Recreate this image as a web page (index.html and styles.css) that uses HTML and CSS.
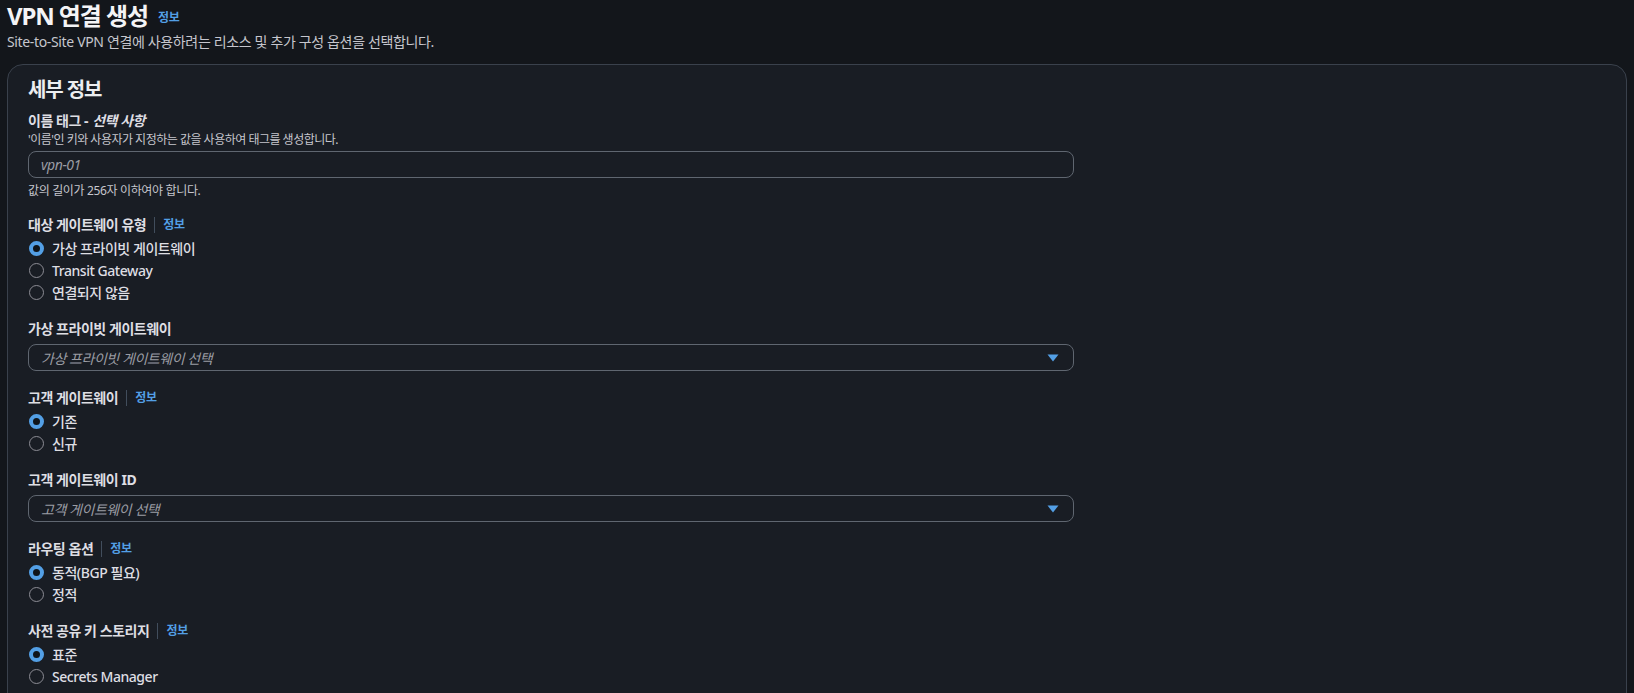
FILE: index.html
```html
<!DOCTYPE html>
<html lang="ko">
<head>
<meta charset="utf-8">
<title>VPN 연결 생성</title>
<link rel="stylesheet" href="styles.css">
</head>
<body>
<div class="page">
  <header class="page-header">
    <h1 class="title">VPN 연결 생성 <a class="info" href="#">정보</a></h1>
    <p class="subtitle">Site-to-Site VPN 연결에 사용하려는 리소스 및 추가 구성 옵션을 선택합니다.</p>
  </header>

  <section class="container">
    <h2 class="container-title">세부 정보</h2>

    <div class="field">
      <div class="label">이름 태그 - <em>선택 사항</em></div>
      <div class="desc">'이름'인 키와 사용자가 지정하는 값을 사용하여 태그를 생성합니다.</div>
      <div class="input"><span class="placeholder">vpn-01</span></div>
      <div class="constraint">값의 길이가 256자 이하여야 합니다.</div>
    </div>

    <div class="field">
      <div class="label">대상 게이트웨이 유형<span class="sep"></span><a class="info" href="#">정보</a></div>
      <div class="radios">
        <div class="radio checked"><span class="dot"></span>가상 프라이빗 게이트웨이</div>
        <div class="radio"><span class="dot"></span>Transit Gateway</div>
        <div class="radio"><span class="dot"></span>연결되지 않음</div>
      </div>
    </div>

    <div class="field select-field">
      <div class="label">가상 프라이빗 게이트웨이</div>
      <div class="input select"><span class="placeholder">가상 프라이빗 게이트웨이 선택</span><svg class="caret" width="12" height="8" viewBox="0 0 12 8"><path d="M0.5 0.5h11L6 7.5z" fill="#539fe5"/></svg></div>
    </div>

    <div class="field">
      <div class="label">고객 게이트웨이<span class="sep"></span><a class="info" href="#">정보</a></div>
      <div class="radios">
        <div class="radio checked"><span class="dot"></span>기존</div>
        <div class="radio"><span class="dot"></span>신규</div>
      </div>
    </div>

    <div class="field select-field">
      <div class="label">고객 게이트웨이 ID</div>
      <div class="input select"><span class="placeholder">고객 게이트웨이 선택</span><svg class="caret" width="12" height="8" viewBox="0 0 12 8"><path d="M0.5 0.5h11L6 7.5z" fill="#539fe5"/></svg></div>
    </div>

    <div class="field">
      <div class="label">라우팅 옵션<span class="sep"></span><a class="info" href="#">정보</a></div>
      <div class="radios">
        <div class="radio checked"><span class="dot"></span>동적(BGP 필요)</div>
        <div class="radio"><span class="dot"></span>정적</div>
      </div>
    </div>

    <div class="field">
      <div class="label">사전 공유 키 스토리지<span class="sep"></span><a class="info" href="#">정보</a></div>
      <div class="radios">
        <div class="radio checked"><span class="dot"></span>표준</div>
        <div class="radio"><span class="dot"></span>Secrets Manager</div>
      </div>
    </div>
  </section>
</div>
</body>
</html>
```

FILE: styles.css
```css
* { box-sizing: border-box; }
html, body {
  margin: 0;
  background: #13161b;
  color: #d1d5db;
  font-family: "Noto Sans", "Noto Sans CJK KR", sans-serif;
  font-size: 14px;
  letter-spacing: -0.45px;
  overflow: hidden;
}
.page {
  padding: 0 7px;
}
.page-header {
  display: flex;
  flex-direction: column;
}
.title {
  margin: 0;
  font-size: 24px;
  line-height: 32px;
  font-weight: 700;
  color: #f4f4f6;
  letter-spacing: -1.1px;
  display: flex;
  align-items: center;
  gap: 10px;
}
.title .info { font-size: 12px; line-height: 16px; margin-top: 4px; letter-spacing: -0.3px; }
.subtitle {
  margin: 0;
  font-size: 14px;
  line-height: 20px;
  color: #c6c6cd;
  letter-spacing: -0.35px;
}
.info {
  color: #539fe5;
  font-weight: 700;
  font-size: 12px;
  text-decoration: none;
}
.container {
  margin-top: 12px;
  background: #191d24;
  border: 1px solid #3a414c;
  border-radius: 16px;
  padding: 13px 20px 40px;
  display: flex;
  flex-direction: column;
  gap: 16px;
}
.container-title {
  margin: 0 0 -7px;
  font-size: 20px;
  line-height: 24px;
  font-weight: 700;
  color: #eceef0;
  letter-spacing: -1.1px;
}
.field {
  display: flex;
  flex-direction: column;
}
.select-field { margin-bottom: 1px; }
.label {
  font-size: 14px;
  line-height: 20px;
  font-weight: 700;
  color: #dedee3;
  display: flex;
  align-items: center;
}
.label em { font-style: italic; margin-left: 4px; }
.sep {
  width: 1px;
  height: 16px;
  background: #414d5c;
  margin: 0 8px;
}
.label .info { font-size: 12px; letter-spacing: -0.3px; }
.desc {
  font-size: 12px;
  line-height: 16px;
  color: #c6c6cd;
  margin-top: 1px;
  letter-spacing: -0.5px;
}
.constraint {
  font-size: 12px;
  line-height: 16px;
  color: #c6c6cd;
  margin-top: 5px;
  letter-spacing: -0.35px;
}
.input {
  width: 1046px;
  height: 27px;
  border: 1px solid #5f6670;
  border-radius: 8px;
  margin-top: 4px;
  display: flex;
  align-items: center;
  padding: 0 12px;
}
.desc + .input { margin-top: 3px; }
.label + .input { margin-top: 5px; }
.placeholder {
  font-style: italic;
  color: #9a9ca3;
  font-size: 14px;
}
.select { justify-content: space-between; }
.caret { margin-right: 2px; }
.radios {
  margin-top: 2px;
  display: flex;
  flex-direction: column;
}
.radio {
  height: 22px;
  display: flex;
  align-items: center;
  gap: 8px;
  color: #dedee3;
  font-size: 14px;
  font-weight: 500;
}
.dot {
  width: 15px;
  height: 15px;
  border-radius: 50%;
  border: 1.5px solid #8c8c94;
  margin-left: 1px;
}
.radio.checked .dot {
  border: 4px solid #539fe5;
  background: #0f141a;
}
```
